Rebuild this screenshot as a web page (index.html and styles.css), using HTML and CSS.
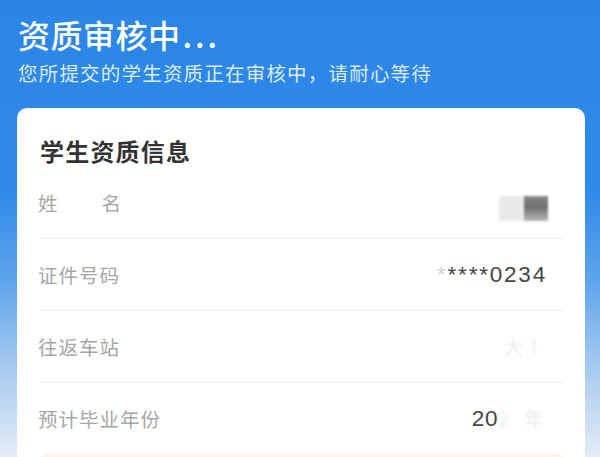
FILE: index.html
```html
<!DOCTYPE html>
<html lang="zh-CN">
<head>
<meta charset="utf-8">
<title>资质审核中</title>
<link rel="stylesheet" href="styles.css">
</head>
<body>
<div class="page">
  <header class="hero">
    <h1 class="hero-title">资质审核中<span class="dots">...</span></h1>
    <p class="hero-sub">您所提交的学生资质正在审核中，请耐心等待</p>
  </header>
  <section class="card">
    <h2 class="card-title">学生资质信息</h2>
    <div class="row">
      <span class="label label-spread"><span>姓</span><span>名</span></span>
      <span class="value"><span class="mosaic"><span class="mosaic-a"></span><span class="mosaic-b"></span></span></span>
    </div>
    <div class="row">
      <span class="label">证件号码</span>
      <span class="value id-value"><span class="fade">*</span>****0234</span>
    </div>
    <div class="row">
      <span class="label">往返车站</span>
      <span class="value"><span class="ghost">大</span><span class="ghost">丨</span></span>
    </div>
    <div class="row">
      <span class="label">预计毕业年份</span>
      <span class="value">20<span class="ghost">2</span><span class="ghost gap">年</span></span>
    </div>
    <div class="notice"></div>
  </section>
</div>
</body>
</html>
```

FILE: styles.css
```css
html, body {
  margin: 0;
  padding: 0;
}
body {
  width: 600px;
  height: 457px;
  overflow: hidden;
  font-family: "Noto Sans CJK SC", "Noto Sans", "Liberation Sans", sans-serif;
  background: linear-gradient(180deg, #2a85e5 0px, #2f8ae8 190px, #5ea4ec 280px, #a9cbf0 370px, #e4ecf6 457px);
}
.page {
  display: flex;
  flex-direction: column;
}
.hero {
  padding: 12px 0 0 18px;
}
.hero-title {
  margin: 0;
  font-size: 32px;
  line-height: 44px;
  font-weight: 500;
  color: #ffffff;
  letter-spacing: 0.5px;
}
.dots {
  letter-spacing: 3px;
  margin-left: 2px;
}
.hero-sub {
  margin: 4px 0 0;
  font-size: 19.5px;
  line-height: 26px;
  color: #dcebfc;
  letter-spacing: 1.2px;
}
.card {
  margin: 22px 15px 0 17px;
  background: #ffffff;
  border-radius: 10px;
  padding: 0 22px 0 23px;
  height: 400px;
}
.card-title {
  margin: 0;
  padding-top: 27px;
  font-size: 24px;
  line-height: 32px;
  font-weight: 700;
  color: #333333;
  letter-spacing: 1.2px;
}
.row {
  display: flex;
  align-items: center;
  justify-content: space-between;
  height: 71px;
  border-bottom: 1px solid #efefef;
  padding-right: 18px;
}
.label {
  font-size: 19.5px;
  color: #a6a6a6;
  margin-left: -2px;
  letter-spacing: 1px;
}
.label-spread {
  display: flex;
  width: 84px;
  justify-content: space-between;
}
.value {
  font-family: "Liberation Sans", "Noto Sans CJK SC", sans-serif;
  font-size: 22.5px;
  letter-spacing: 0.8px;
  color: #454545;
  display: flex;
  align-items: center;
}
.id-value {
  letter-spacing: 1.8px;
  margin-right: -2px;
}
.fade {
  color: #cfcfcf;
}
.mosaic {
  display: flex;
  width: 49px;
  height: 25px;
  filter: blur(1px);
  margin: 12px -3px 0 0;
}
.mosaic-a {
  flex: 1;
  background: #e9e9e9;
}
.mosaic-b {
  flex: 1;
  background: linear-gradient(180deg, #8a8a8a 0%, #6f6f6f 45%, #b9b9b9 100%);
}
.ghost {
  font-family: "Noto Sans CJK SC", sans-serif;
  font-size: 20px;
  color: #eaeaea;
  filter: blur(1px);
}
.gap {
  margin-left: 14px;
}
.row:nth-of-type(4) {
  border-bottom: none;
}
.notice {
  height: 40px;
  background: #fff4ec;
  border-radius: 6px;
}
```
